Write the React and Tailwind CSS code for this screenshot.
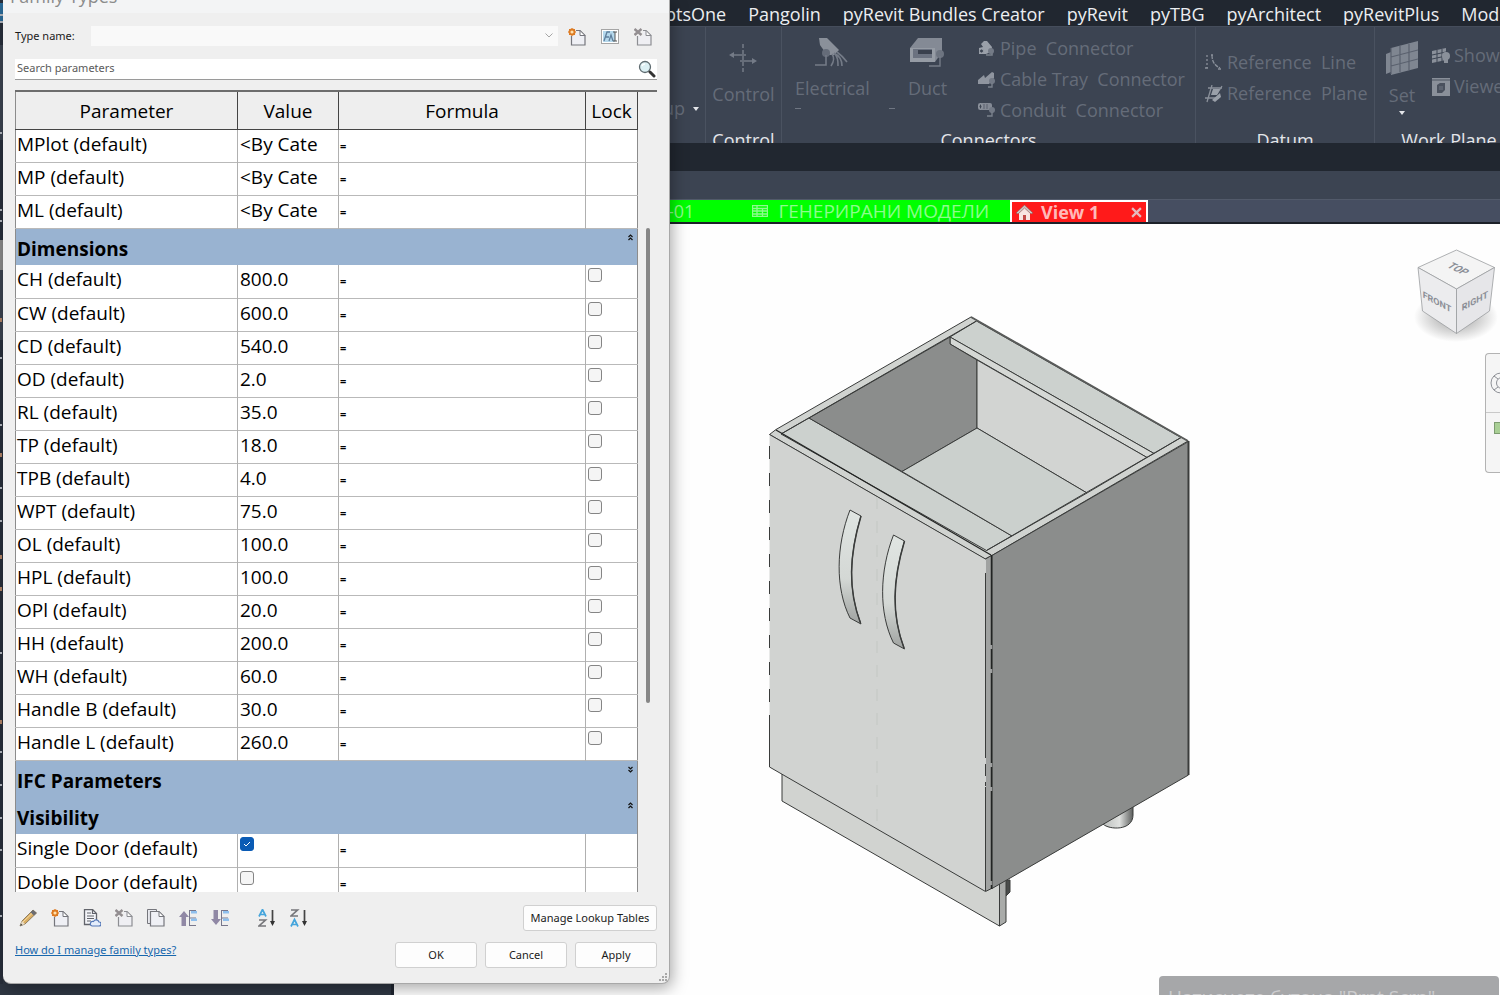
import { useState } from 'react';

const materialRows = ['MPlot', 'MP', 'ML'];

const dimensionRows = [
  ['CH', '800.0'],
  ['CW', '600.0'],
  ['CD', '540.0'],
  ['OD', '2.0'],
  ['RL', '35.0'],
  ['TP', '18.0'],
  ['TPB', '4.0'],
  ['WPT', '75.0'],
  ['OL', '100.0'],
  ['HPL', '100.0'],
  ['OPl', '20.0'],
  ['HH', '200.0'],
  ['WH', '60.0'],
  ['Handle B', '30.0'],
  ['Handle L', '260.0'],
];

const ribbonTabs = ['ptsOne', 'Pangolin', 'pyRevit Bundles Creator', 'pyRevit', 'pyTBG', 'pyArchitect', 'pyRevitPlus', 'Mod'];

/* ─── Ribbon icons ─── */

function ControlIcon() {
  return (
    <svg viewBox="0 0 28 30" className="w-7 h-[30px]" fill="none" stroke="#747b87" strokeWidth="1.5">
      <path d="M14 0v30" strokeDasharray="4 2" />
      <path d="M3 11h14M11 17h13" />
      <path d="M5 8l-5 3 5 3zM23 14l5 3-5 3z" fill="#747b87" stroke="none" />
    </svg>
  );
}

function ElectricalIcon() {
  return (
    <svg viewBox="0 0 34 30" className="w-[34px] h-[30px]" fill="none" stroke="#747b87" strokeWidth="1.6">
      <path d="M4 0h8l12 12-5 5h-7L5 7z" fill="#8a909a" stroke="none" />
      <path d="M17 16c3 4 1 9-1 12M19 15c4 4 4 8 4 13M22 14c4 3 7 6 10 10M19 15c6 3 8 8 8 13" />
      <circle cx="11" cy="15" r="4" fill="#656c79" stroke="none" />
      <path d="M11 17v10H0" />
    </svg>
  );
}

function DuctIcon() {
  return (
    <svg viewBox="0 0 34 30" className="w-[34px] h-[30px]">
      <path d="M0 10L8 0h24v14l-7 10H0z" fill="#848a95" />
      <path d="M0 10h25v14H0z" fill="#969ca5" />
      <path d="M3 11h19v9H3z" fill="#6b7280" />
      <path d="M8 12h14v4H8z" fill="#3a414e" />
      <circle cx="30" cy="16" r="4" fill="#6d7480" />
      <path d="M30 18v10H19" fill="none" stroke="#747b87" strokeWidth="1.4" />
    </svg>
  );
}

function PipeIcon() {
  return (
    <svg viewBox="0 0 18 18" className="w-[18px] h-[18px]">
      <path d="M3 4l3-3h3l5 6-1 5-5 2H1V8l4-1z" fill="#9aa0a9" />
      <circle cx="3.500" cy="11" r="2" fill="#3c4452" stroke="#9aa0a9" />
      <path d="M8 15h6v-5" fill="none" stroke="#7a818c" strokeWidth="1.500" />
      <circle cx="13" cy="11" r="3" fill="#737a86" />
    </svg>
  );
}

function CableTrayIcon() {
  return (
    <svg viewBox="0 0 18 18" className="w-[18px] h-[18px]">
      <path d="M0 9l6-5 1 3 7-6 2 1v5l-5 6H0z" fill="#8f959f" />
      <circle cx="14" cy="10" r="3" fill="#737a86" />
      <path d="M14 12v4h-4" fill="none" stroke="#7a818c" strokeWidth="1.4" />
    </svg>
  );
}

function ConduitIcon() {
  return (
    <svg viewBox="0 0 18 18" className="w-[18px] h-[18px]">
      <rect x="0" y="1" width="14" height="7" rx="2" fill="#848a95" />
      <ellipse cx="2.500" cy="4.500" rx="1.500" ry="2.500" fill="#3c4452" stroke="#9aa0a9" />
      <path d="M6 2v5M9 2v5" stroke="#5a616e" />
      <circle cx="14" cy="8" r="3" fill="#737a86" />
      <path d="M14 10v4H9" fill="none" stroke="#7a818c" strokeWidth="1.4" />
    </svg>
  );
}

function ReferenceLineIcon() {
  return (
    <svg viewBox="0 0 18 18" className="w-[18px] h-[18px]" fill="none" stroke="#8a909a" strokeWidth="1.3">
      <path d="M2 1v13" strokeDasharray="2 2" />
      <path d="M7 1c0 6 2 10 8 13" strokeDasharray="4 1" />
      <path d="M0 14h3M13 15h3M6 1h2" />
    </svg>
  );
}

function ReferencePlaneIcon() {
  return (
    <svg viewBox="0 0 18 18" className="w-[18px] h-[18px]" fill="none" stroke="#8a909a" strokeWidth="1.3">
      <path d="M3 3h14M0 13h14M7 0L2 17M17 1l-5 8" />
      <path d="M8 4h7l-3 6H6z" fill="#9aa0a9" stroke="none" />
      <path d="M7 15l8-7 1 4-6 5z" fill="#9aa0a9" stroke="none" />
    </svg>
  );
}

function WorkPlaneIcon() {
  return (
    <svg viewBox="0 0 32 34" className="w-8 h-[34px]">
      <path d="M0 13l5-2v20l-5 2z" fill="#7f8691" />
      <path d="M5 7L32 0v27L5 34z" fill="#7f8691" />
      <path d="M5 7v26M14 5v26M23 3v26M5 16l27-7M5 25l27-7" stroke="#5a616e" strokeWidth="1.2" />
    </svg>
  );
}

function ShowIcon() {
  return (
    <svg viewBox="0 0 18 18" className="w-[18px] h-[18px]">
      <path d="M0 4l14-3v12L0 16z" fill="#8a909a" />
      <path d="M5 3v12M10 2v12M0 8l14-3M0 12l14-3" stroke="#3c4452" />
      <circle cx="14" cy="9" r="4" fill="#8a909a" />
      <path d="M12 12h4v4h-4z" fill="#8a909a" />
    </svg>
  );
}

function ViewerIcon() {
  return (
    <svg viewBox="0 0 18 18" className="w-[18px] h-[18px]">
      <rect width="18" height="18" fill="#8a909a" />
      <rect y="1" width="18" height="2" fill="#6b727d" />
      <path d="M5 7l3-2h5v7l-3 3H5z" fill="#4a515e" />
      <path d="M7 8h4v4H7z" fill="#5c6370" />
    </svg>
  );
}

/* ─── Dialog icons ─── */

function Page({ x = 3, y = 2 }) {
  return (
    <g transform={`translate(${x} ${y})`}>
      <path d="M.5.5h8.500l5 5v9.500H.5z" fill="#eff0f5" stroke="#75767c" strokeWidth="1.2" />
      <path d="M9 .5v5h5z" fill="#fff" stroke="#75767c" />
    </g>
  );
}

function NewIcon() {
  return (
    <svg viewBox="0 0 18 18" className="w-[18px] h-[18px]">
      <Page />
      <path d="M0 0h8v8H0z" fill="#efefef" />
      <circle cx="4" cy="4" r="2.500" fill="#ffe2ae" stroke="#dd7a22" strokeWidth="1.800" />
      <path d="M4 0v2M4 6v2M0 4h2M6 4h2M1 1l1.500 1.500M7 1L5.500 2.500M1 7l1.500-1.500M7 7L5.500 5.500" stroke="#dd7a22" />
    </svg>
  );
}

function RemoveIcon() {
  return (
    <svg viewBox="0 0 18 18" className="w-[18px] h-[18px] opacity-80">
      <Page />
      <path d="M0 0h9v8H0z" fill="#efefef" />
      <path d="M.5 1l7 6M7.500 1l-7 6" stroke="#7d777a" strokeWidth="2.400" />
    </svg>
  );
}

function RenameIcon() {
  return (
    <svg viewBox="0 0 18 18" className="w-[18px] h-[18px]">
      <rect x=".5" y="1.500" width="17" height="14" fill="#fff" stroke="#a5a5a5" />
      <rect x="2" y="3" width="12" height="11" fill="#b5d8ec" />
      <path d="M3 13l3-9h3M4 9h4M8 13l2-6 2 6" fill="none" stroke="#5f7f9c" strokeWidth="1.3" />
      <path d="M12 4h4M12 13h4M14 4v9" stroke="#555" />
    </svg>
  );
}

function SearchIcon() {
  return (
    <svg viewBox="0 0 18 18" className="w-[18px] h-[18px]">
      <circle cx="7" cy="7" r="5.500" fill="#dcf0f4" stroke="#5f6b70" strokeWidth="1.3" />
      <path d="M12 12l4 4" stroke="#333" strokeWidth="3" strokeLinecap="round" />
      <path d="M4 6c.5-1.500 1.500-2 3-2" stroke="#fff" strokeWidth="1.500" fill="none" />
    </svg>
  );
}

function PencilIcon() {
  return (
    <svg viewBox="0 0 18 18" className="w-[18px] h-[18px]">
      <path d="M1 17l2-5L14 1l3.500 3L6 15z" fill="#d9ad62" stroke="#7a6a4e" strokeWidth=".8" />
      <path d="M11.500 3.500L14 1l3.500 3-2.500 2.500z" fill="#6b6c72" />
      <path d="M4 13L13 4.500" stroke="#f6dca5" />
      <path d="M1 17l2-5 3 3z" fill="#e9dcc5" />
      <path d="M1 17l1-2.500 1.500 1.500z" fill="#444" />
    </svg>
  );
}

function SheetCloudIcon() {
  return (
    <svg viewBox="0 0 18 18" className="w-[18px] h-[18px]">
      <path d="M1.500.5h8l4 4v11h-12z" fill="#f3f4f8" stroke="#62646b" strokeWidth="1.3" />
      <path d="M9.500.5v4h4M4 4h4M4 7h7M4 9.500h7M4 12h4" fill="none" stroke="#62646b" strokeWidth="1.200" />
      <path d="M9 17h7a2 2 0 0 0 0-4 3 3 0 0 0-5.500-.5A2.300 2.300 0 0 0 9 17z" fill="#e4edfb" stroke="#5478b8" strokeWidth="1.200" />
    </svg>
  );
}

function CopyIcon() {
  return (
    <svg viewBox="0 0 18 18" className="w-[18px] h-[18px]">
      <path d="M.5.5h9v14h-9z" fill="#e8e9ee" stroke="#75767c" />
      <Page x={3} y={2} />
    </svg>
  );
}

function MoveIcon({ down }) {
  return (
    <svg viewBox="0 0 18 18" className="w-[18px] h-[18px]">
      {down
        ? <path d="M2.500 1h4.500v9h3l-5 6-5-6h2.500z" fill="#9088a5" />
        : <path d="M2.500 17h4.500V8h3L5 2 0 8h2.500z" fill="#9088a5" />}
      <path d="M10.500 1v16M10 1.500h7M10 9h7M10 16.500h7" stroke="#77778c" />
      <path d="M12 2h6v2.500h-6zM12 9.500h6V12h-6z" fill="#8fc0ee" />
    </svg>
  );
}

function SortIcon({ reverse }) {
  const a = reverse ? 10 : 0;
  const z = reverse ? 0 : 10;
  return (
    <svg viewBox="0 0 18 18" className="w-[18px] h-[18px]" fill="none" strokeWidth="1.700">
      <path d="M1 7.500L4.500.5 8 7.500M2.200 5.500h4.600" stroke="#45a5dc" transform={`translate(0 ${a})`} />
      <path d="M1 1h6.500L1 7h7" stroke="#77777b" transform={`translate(0 ${z})`} />
      <path d="M14.500 1v14" stroke="#444" />
      <path d="M12 12h5l-2.500 5z" fill="#333" />
    </svg>
  );
}

function GroupChevron({ up }) {
  return (
    <svg viewBox="0 0 7 7" className="w-[7px] h-[7px]" fill="none" stroke="#111" strokeWidth="1.2">
      {up ? <path d="M1.500 3l2-2 2 2M1.500 6l2-2 2 2" /> : <path d="M1.500 1l2 2 2-2M1.500 4l2 2 2-2" />}
    </svg>
  );
}

/* ─── Ribbon ─── */

function RibbonPanel({ title, className, children }) {
  return (
    <section className={`relative shrink-0 h-full border-l border-[#4a5260] ${className}`}>
      {children}
      <h2 className="absolute inset-x-0 top-[101px] text-center text-[18px] leading-6 whitespace-nowrap text-[#e4e6ea]">{title}</h2>
    </section>
  );
}

function SmallCommand({ icon, label }) {
  return (
    <button className="flex items-center gap-1 h-[31px] text-[18px] whitespace-pre">
      {icon}
      {label}
    </button>
  );
}

function LargeCommand({ icon, label }) {
  return (
    <button className="flex flex-col items-center gap-2 text-[18px] leading-6">
      {icon}
      {label}
    </button>
  );
}

function Ribbon() {
  return (
    <div className="flex h-[117px] shrink-0 overflow-hidden bg-[#3c4452] border-t border-[#454d5b] pl-[663px] text-[#656c79]">
      <div className="flex items-center gap-2 w-[42px] shrink-0 pt-[47px] text-[18px]">
        up
        <svg viewBox="0 0 6 4" className="w-[6px] h-1"><path d="M0 0h6L3 4z" fill="#e4e6ea" /></svg>
      </div>

      <RibbonPanel title="Control" className="w-[76px] flex flex-col items-center pt-[17px]">
        <LargeCommand icon={<ControlIcon />} label="Control" />
      </RibbonPanel>

      <RibbonPanel title="Connectors" className="w-[414px] flex items-start pl-[13px]">
        <div className="w-[94px] pt-[11px]">
          <LargeCommand icon={<ElectricalIcon />} label="Electrical" />
          <div className="mt-2 w-[6px] h-px bg-[#6f7682]" />
        </div>
        <div className="w-[89px] pt-[11px]">
          <div className="flex justify-center pr-3"><LargeCommand icon={<DuctIcon />} label="Duct" /></div>
          <div className="mt-2 w-[6px] h-px bg-[#6f7682]" />
        </div>
        <div className="flex flex-col pt-[6px]">
          <SmallCommand icon={<PipeIcon />} label="Pipe  Connector" />
          <SmallCommand icon={<CableTrayIcon />} label="Cable Tray  Connector" />
          <SmallCommand icon={<ConduitIcon />} label="Conduit  Connector" />
        </div>
      </RibbonPanel>

      <RibbonPanel title="Datum" className="w-[179px] pl-[9px] pt-[20px]">
        <SmallCommand icon={<ReferenceLineIcon />} label="Reference  Line" />
        <SmallCommand icon={<ReferencePlaneIcon />} label="Reference  Plane" />
      </RibbonPanel>

      <RibbonPanel title="Work Plane" className="w-[149px] flex items-start gap-[14px] pl-[11px]">
        <div className="flex flex-col items-center pt-[14px]">
          <LargeCommand icon={<WorkPlaneIcon />} label="Set" />
          <svg viewBox="0 0 6 4" className="w-[6px] h-1 mt-1"><path d="M0 0h6L3 4z" fill="#e4e6ea" /></svg>
        </div>
        <div className="flex flex-col pt-[13px]">
          <SmallCommand icon={<ShowIcon />} label="Show" />
          <SmallCommand icon={<ViewerIcon />} label="Viewe" />
        </div>
      </RibbonPanel>
    </div>
  );
}

function ViewTabs() {
  return (
    <div className="flex h-[25px] shrink-0 bg-[#464e61] border-t border-[#525a6a] border-b-2 border-b-[#1c2129] pl-[660px] text-[18px] leading-5">
      <div className="flex items-center w-[350px] shrink-0 bg-[#00ff00] pl-2 text-[#8dfc8d]">
        <span>-01</span>
        <svg viewBox="0 0 16 12" className="w-4 h-3 ml-[58px] mr-[10px]" fill="none" stroke="#8dfc8d" strokeWidth="1.300">
          <path d="M.5.5h15v11H.5zM0 3.500h16M0 6h16M0 9h16M5 0v12M10.500 3v9" />
        </svg>
        <span className="text-[19px] whitespace-nowrap">ГЕНЕРИРАНИ МОДЕЛИ</span>
      </div>
      <div className="flex items-center w-[138px] shrink-0 border-2 border-b-0 border-white bg-[#ff1a1a] px-1">
        <svg viewBox="0 0 17 16" className="w-[17px] h-4">
          <path d="M3 8v8h11V8L8.500 3z" fill="#f8e5e2" />
          <path d="M0 9l8.500-8L17 9l-2 1-6.500-6L2 10z" fill="#cfc8c6" stroke="#8e4a48" strokeWidth=".6" />
          <path d="M7 11h3v5H7z" fill="#c24a48" />
        </svg>
        <span className="ml-2 font-bold text-[#ffb9b9]">View 1</span>
        <button aria-label="Close view" className="ml-auto">
          <svg viewBox="0 0 10 10" className="w-[11px] h-[11px]"><path d="M1 1l8 8M9 1L1 9" stroke="#e5b9bd" strokeWidth="2" /></svg>
        </button>
      </div>
    </div>
  );
}

/* ─── Model view ─── */

function Cabinet() {
  return (
    <svg viewBox="760 310 440 625" className="absolute left-[366px] top-[86px] w-[440px] h-[625px]" stroke="#3a3c3b" strokeWidth="1" strokeLinejoin="round">
      <defs>
        <linearGradient id="handle" x1="0" y1="0" x2="0" y2="1">
          <stop offset="0" stopColor="#e0e5e2" />
          <stop offset=".6" stopColor="#d4d8d5" />
          <stop offset="1" stopColor="#9fa2a0" />
        </linearGradient>
        <linearGradient id="foot" x1="0" y1="0" x2="1" y2="0">
          <stop offset="0" stopColor="#bcbfbd" />
          <stop offset=".55" stopColor="#dfe1df" />
          <stop offset="1" stopColor="#5b5d5c" />
        </linearGradient>
      </defs>

      {/* feet and plinth */}
      <path d="M1103 824c6 6 30 7 30-9v-12l-30 10z" fill="url(#foot)" />
      <path d="M1005 880h5v12l-5 5z" fill="#4a4c4b" />
      <path d="M782 773v28l217.500 125V880z" fill="#d1d3d0" />
      <path d="M999.500 880v46l6.500-4v-45z" fill="#a9aba9" />

      {/* top rim */}
      <path d="M769.500 434.500L776 429.500 971 317l217 124-197 115-6 3z" fill="#d0d3d0" />
      <path d="M781 434l28-16 203 118-25.500 14.500z" fill="#ccd1ce" />
      <path d="M950 337l26.500-16L1181 437.500l-27 16z" fill="#ccd1ce" />
      <path d="M950 337l204 116.500-7 4L950 344z" fill="#d5d8d5" />

      {/* inside */}
      <path d="M809 418l141-81v7l27 16v68l-75 43.500z" fill="#8b8d8c" />
      <path d="M977 360l170 97.500-60 35.500-110-65z" fill="#d2d4d2" />
      <path d="M977 428l110 65-75 43-110-64.500z" fill="#cbd0cd" />
      <path d="M781 434l195.500-113M1181 437.500L986.500 550.500" fill="none" />
      <path d="M971 317l217 124" strokeWidth="2" stroke="#5a5c5b" />

      {/* door and side */}
      <path d="M992 555.500l196.500-114V775L992 888.500z" fill="#8b8d8c" />
      <path d="M1188.500 441v334" strokeWidth="2" />
      <path d="M985.500 559l6-3.500v333l-6 3z" fill="#a0a2a1" stroke="none" />
      <path d="M769.500 434.500l216 124.500v332.500L769.500 767z" fill="#d1d3d1" stroke="none" />
      <path d="M769.500 767l216 124.500 6-3M769.500 434.500l216 124.500 6-3.500" fill="none" />
      <path d="M769.500 434v282" strokeDasharray="13 14" strokeDashoffset="-12" fill="none" />
      <path d="M769.500 715v52" fill="none" />
      <path d="M776 430l215 125" strokeWidth="1.200" stroke="#222423" />
      <path d="M985.500 573v173M985.500 787v104" fill="none" />
      <path d="M985.500 746v40" strokeDasharray="12 6" fill="none" />
      <path d="M991.500 555v334" strokeWidth="1.500" stroke="#222423" strokeDasharray="90 4 20 4" />
      <path d="M877 497v332" stroke="#c3c7c3" strokeDasharray="12 12" />

      {/* handles */}
      <path d="M850 510c-14 36-15 78 0 108l11 6c-13-34-12-68 0-108z" fill="url(#handle)" />
      <path d="M861 516c-12 40-13 74-.5 107" strokeWidth="1.500" fill="none" />
      <path d="M893.500 535c-14 36-15 78 0 108l11 6c-13-34-12-68 0-108z" fill="url(#handle)" />
      <path d="M904.500 541c-12 40-13 74-.5 107" strokeWidth="1.500" fill="none" />
    </svg>
  );
}

function ViewCube() {
  return (
    <svg viewBox="1405 240 95 110" className="absolute right-0 top-[17px] w-[95px] h-[110px]" strokeLinejoin="round">
      <defs>
        <radialGradient id="cubeShadow">
          <stop offset=".4" stopColor="#9a9a9a" stopOpacity=".6" />
          <stop offset="1" stopColor="#9a9a9a" stopOpacity="0" />
        </radialGradient>
      </defs>
      <ellipse cx="1456" cy="316" rx="42" ry="25" fill="url(#cubeShadow)" />
      <g stroke="#9b9da0" strokeWidth=".8">
        <path d="M1418 266.500l38.500-17.500 38 17.500-38 21.500z" fill="#f4f4f4" />
        <path d="M1418 266.500l38.500 21.500v44.500l-34-22.500z" fill="#ececee" />
        <path d="M1494.500 266.500l-38 21.500v44.500l33-22.500z" fill="#e6e6e9" />
      </g>
      <g fill="#8b8f97" fontFamily="Roboto, sans-serif" fontWeight="bold" textAnchor="middle">
        <text fontSize="10" transform="translate(1455 270) rotate(26) skewX(-30)">TOP</text>
        <text fontSize="9" transform="translate(1437 304) skewY(28)">FRONT</text>
        <text fontSize="9" transform="translate(1475 303) skewY(-28)">RIGHT</text>
      </g>
    </svg>
  );
}

function NavigationBar() {
  return (
    <div className="absolute right-0 top-[129px] flex flex-col w-[15px] h-[120px] overflow-hidden rounded-l border border-r-0 border-[#b3b3b3] bg-[#f5f5f5]">
      <button aria-label="Steering wheel" className="h-[59px] border-b border-[#c9c9c9] pl-1">
        <svg viewBox="0 0 11 22" className="w-[11px] h-[22px]" fill="none" stroke="#8d9096">
          <circle cx="11" cy="11" r="10" />
          <circle cx="12" cy="11" r="5.500" />
          <path d="M4 4l4 3M4 18l4-3" />
        </svg>
      </button>
      <div className="mt-[9px] ml-2 w-2 h-3 border border-[#7d9b70] bg-[#a9cf95]" />
    </div>
  );
}

/* ─── Family Types dialog ─── */

function CheckBox({ label, defaultChecked = false }) {
  const [checked, setChecked] = useState(defaultChecked);
  return (
    <label className="relative block mt-[3px] w-[14px] h-[14px]">
      <input
        type="checkbox"
        aria-label={label}
        checked={checked}
        onChange={e => setChecked(e.target.checked)}
        className="block appearance-none w-[14px] h-[14px] rounded-[3px] border border-[#858585] bg-[#f5f5f5] checked:border-[#0a5bb5] checked:bg-[#0a5bb5]"
      />
      {checked && (
        <svg viewBox="0 0 14 14" className="absolute inset-0 w-[14px] h-[14px] pointer-events-none">
          <path d="M4 7l2 2 4-4" fill="none" stroke="#fff" />
        </svg>
      )}
    </label>
  );
}

function ParameterRow({ name, value, lock }) {
  return (
    <tr className="h-[33px] border-b border-[#b9b9b9] bg-white">
      <td className="pl-px align-top">{name} (default)</td>
      <td className="pl-[2px] border-l border-[#b0b0b0] align-top">{value}</td>
      <td className="pl-px border-l border-[#b0b0b0] text-[11px] font-bold">=</td>
      <td className="pl-[2px] border-l border-[#b0b0b0] align-top">{lock && <CheckBox label={`Lock ${name}`} />}</td>
    </tr>
  );
}

function GroupRow({ title, up }) {
  return (
    <tr className="h-[37px] bg-[#99b3d1]">
      <th colSpan="3" className="pl-px pt-1 text-left font-bold">{title}</th>
      <td className="align-top">
        <button aria-label={`Toggle ${title}`} className="flex ml-auto mr-[3px] mt-[5px]"><GroupChevron up={up} /></button>
      </td>
    </tr>
  );
}

function ParameterTable() {
  return (
    <div className="flex h-[802px] overflow-hidden border-t-2 border-[#6d6d6d]">
      <table className="table-fixed border-collapse w-[623px] h-fit border-x border-x-[#8c8c8c] text-[19px] leading-7 text-black">
        <colgroup>
          <col className="w-[222px]" />
          <col className="w-[101px]" />
          <col className="w-[247px]" />
          <col />
        </colgroup>
        <thead>
          <tr className="h-[37px] border-b border-[#444] bg-[#eeeeee]">
            <th className="pt-[2px] font-normal">Parameter</th>
            <th className="pt-[2px] font-normal border-l border-[#444]">Value</th>
            <th className="pt-[2px] font-normal border-l border-[#444]">Formula</th>
            <th className="pt-[2px] font-normal border-x border-[#444]">Lock</th>
          </tr>
        </thead>
        <tbody>
          {materialRows.map(name => (
            <ParameterRow key={name} name={name} value="<By Cate" />
          ))}
          <GroupRow title="Dimensions" up />
          {dimensionRows.map(([name, value]) => (
            <ParameterRow key={name} name={name} value={value} lock />
          ))}
          <GroupRow title="IFC Parameters" />
          <GroupRow title="Visibility" up />
          <ParameterRow name="Single Door" value={<CheckBox label="Single Door" defaultChecked />} />
          <ParameterRow name="Doble Door" value={<CheckBox label="Doble Door" />} />
        </tbody>
      </table>
      <div className="flex-1 pl-2 pt-[136px]">
        <div className="w-1 h-[475px] rounded-full bg-[#868686]" />
      </div>
    </div>
  );
}

const toolbar = [
  ['Edit parameter', <PencilIcon />],
  ['New parameter', <NewIcon />],
  ['Shared parameter', <SheetCloudIcon />],
  ['Delete parameter', <RemoveIcon />],
  ['Duplicate parameter', <CopyIcon />],
  ['Move up', <MoveIcon />],
  ['Move down', <MoveIcon down />],
];

function DialogButton({ children, className }) {
  return (
    <button className={`h-[26px] rounded-[3px] border border-[#d0d0d0] bg-[#fdfdfd] text-[11px] ${className}`}>{children}</button>
  );
}

function FamilyTypesDialog() {
  return (
    <div role="dialog" aria-label="Family Types" className="absolute left-[3px] top-0 w-[667px] h-[984px] overflow-hidden rounded-b-lg border-b border-r border-[#a8a8a8] bg-[#efefef] shadow-[2px_4px_16px_rgba(0,0,0,0.35)] text-[#1a1a1a]">
      <div className="h-[13px] overflow-hidden bg-[#f3f4f5] pl-[7px]">
        <h1 className="-mt-4 text-[18px] leading-6 text-[#8c8c8c]">Family Types</h1>
      </div>

      <div className="flex flex-col px-3 font-['Noto_Sans',sans-serif] text-[11px] leading-4">
        <div className="flex items-center pt-[13px]">
          <label htmlFor="type-name" className="w-[76px]">Type name:</label>
          <div className="relative w-[467px]">
            <select id="type-name" disabled className="block appearance-none w-full h-5 bg-[#f9f9f9]">
              <option></option>
            </select>
            <svg viewBox="0 0 8 5" className="absolute right-[5px] top-[7px] w-2 h-[5px]"><path d="M.5.5l3.500 3.500L7.500.5" fill="none" stroke="#a5a5a5" /></svg>
          </div>
          <div className="flex gap-[15px] pl-[10px] pt-[2px]">
            <button aria-label="New type"><NewIcon /></button>
            <button aria-label="Rename type"><RenameIcon /></button>
            <button aria-label="Delete type"><RemoveIcon /></button>
          </div>
        </div>

        <div className="flex items-center mt-[13px] mb-[10px] h-[21px] bg-white border-b border-[#9a9a9a]">
          <input
            type="text"
            aria-label="Search parameters"
            placeholder="Search parameters"
            className="flex-1 pl-[2px] pb-[2px] outline-none placeholder:text-[#5a5a5a]"
          />
          <button aria-label="Search" className="pr-px"><SearchIcon /></button>
        </div>
      </div>

      <div className="px-3">
        <ParameterTable />
      </div>

      <div className="px-3 font-['Noto_Sans',sans-serif] text-[11px] leading-4">
        <div className="flex items-center pt-[13px] pl-1">
          <div className="flex gap-[14px]">
            {toolbar.map(([label, icon]) => (
              <button key={label} aria-label={label}>{icon}</button>
            ))}
          </div>
          <div className="flex gap-[14px] pl-[29px]">
            <button aria-label="Sort ascending"><SortIcon /></button>
            <button aria-label="Sort descending"><SortIcon reverse /></button>
          </div>
          <DialogButton className="ml-auto w-[134px]">Manage Lookup Tables</DialogButton>
        </div>
        <div className="flex items-start gap-2 pt-[11px]">
          <a href="#help" className="mr-auto text-[#1767ad] underline">How do I manage family types?</a>
          <DialogButton className="w-[82px]">OK</DialogButton>
          <DialogButton className="w-[82px]">Cancel</DialogButton>
          <DialogButton className="w-[82px]">Apply</DialogButton>
        </div>
      </div>

      <svg viewBox="0 0 9 9" className="absolute right-[1px] bottom-[1px] w-[9px] h-[9px]" fill="#a8a8a8">
        <path d="M6 0h2v2H6zM3 3h2v2H3zM6 3h2v2H6zM0 6h2v2H0zM3 6h2v2H3zM6 6h2v2H6z" />
      </svg>
    </div>
  );
}

/* sliver of the docked browser left of the dialog */
function DockEdge() {
  return (
    <svg viewBox="0 0 3 984" className="absolute left-0 top-0 w-[3px] h-[984px]">
      <path d="M0 0h3v984H0z" fill="#29303c" />
      <path d="M0 3h3v20H0z" fill="#2d6f9e" />
      <path d="M0 45h3v95H0zM0 270h3v70H0z" fill="#3c4452" />
      <path d="M0 240h3v30H0z" fill="#8c8c8c" />
      <path d="M0 15h3M0 22h3M0 133h2M0 210h2M0 221h2M0 358h2M0 425h2M0 488h2M0 521h2M0 653h2M0 752h2M0 785h2M0 818h2M0 850h2M0 916h2" stroke="#b9bec6" strokeWidth="2" />
      <path d="M0 320h2M0 455h2M0 557h2M0 589h2M0 722h2" stroke="#b98a6c" strokeWidth="4" />
    </svg>
  );
}

export default function App() {
  return (
    <div className="relative flex flex-col h-screen overflow-hidden bg-[#2f3743] font-['Open_Sans','Noto_Sans',sans-serif]">
      <nav className="flex gap-[22px] h-[26px] shrink-0 bg-[#212730] pl-[665px] pt-[2px] text-[18px] leading-6 text-[#eceef1] whitespace-nowrap">
        {ribbonTabs.map(tab => <a key={tab} href="#ribbon">{tab}</a>)}
      </nav>
      <Ribbon />
      <div className="h-7 shrink-0 bg-[#212730]" />
      <div className="h-7 shrink-0 bg-[#3c4452]" />
      <ViewTabs />

      <main className="flex flex-1 min-h-0">
        <aside className="w-[394px] shrink-0 border-r-[3px] border-[#1f2530] bg-[#2f3743]" />
        <div className="relative flex-1 overflow-hidden bg-[#fefefe]">
          <Cabinet />
          <ViewCube />
          <NavigationBar />
          <div className="absolute right-px bottom-0 w-[340px] h-[19px] overflow-hidden rounded-t bg-[#a6a7a9] pl-[9px] pt-[7px] text-[19px] leading-7 whitespace-nowrap text-[#cdcdcf]">
            Натиснете бутона "Prnt Scrn"
          </div>
        </div>
      </main>

      <DockEdge />
      <FamilyTypesDialog />
    </div>
  );
}
